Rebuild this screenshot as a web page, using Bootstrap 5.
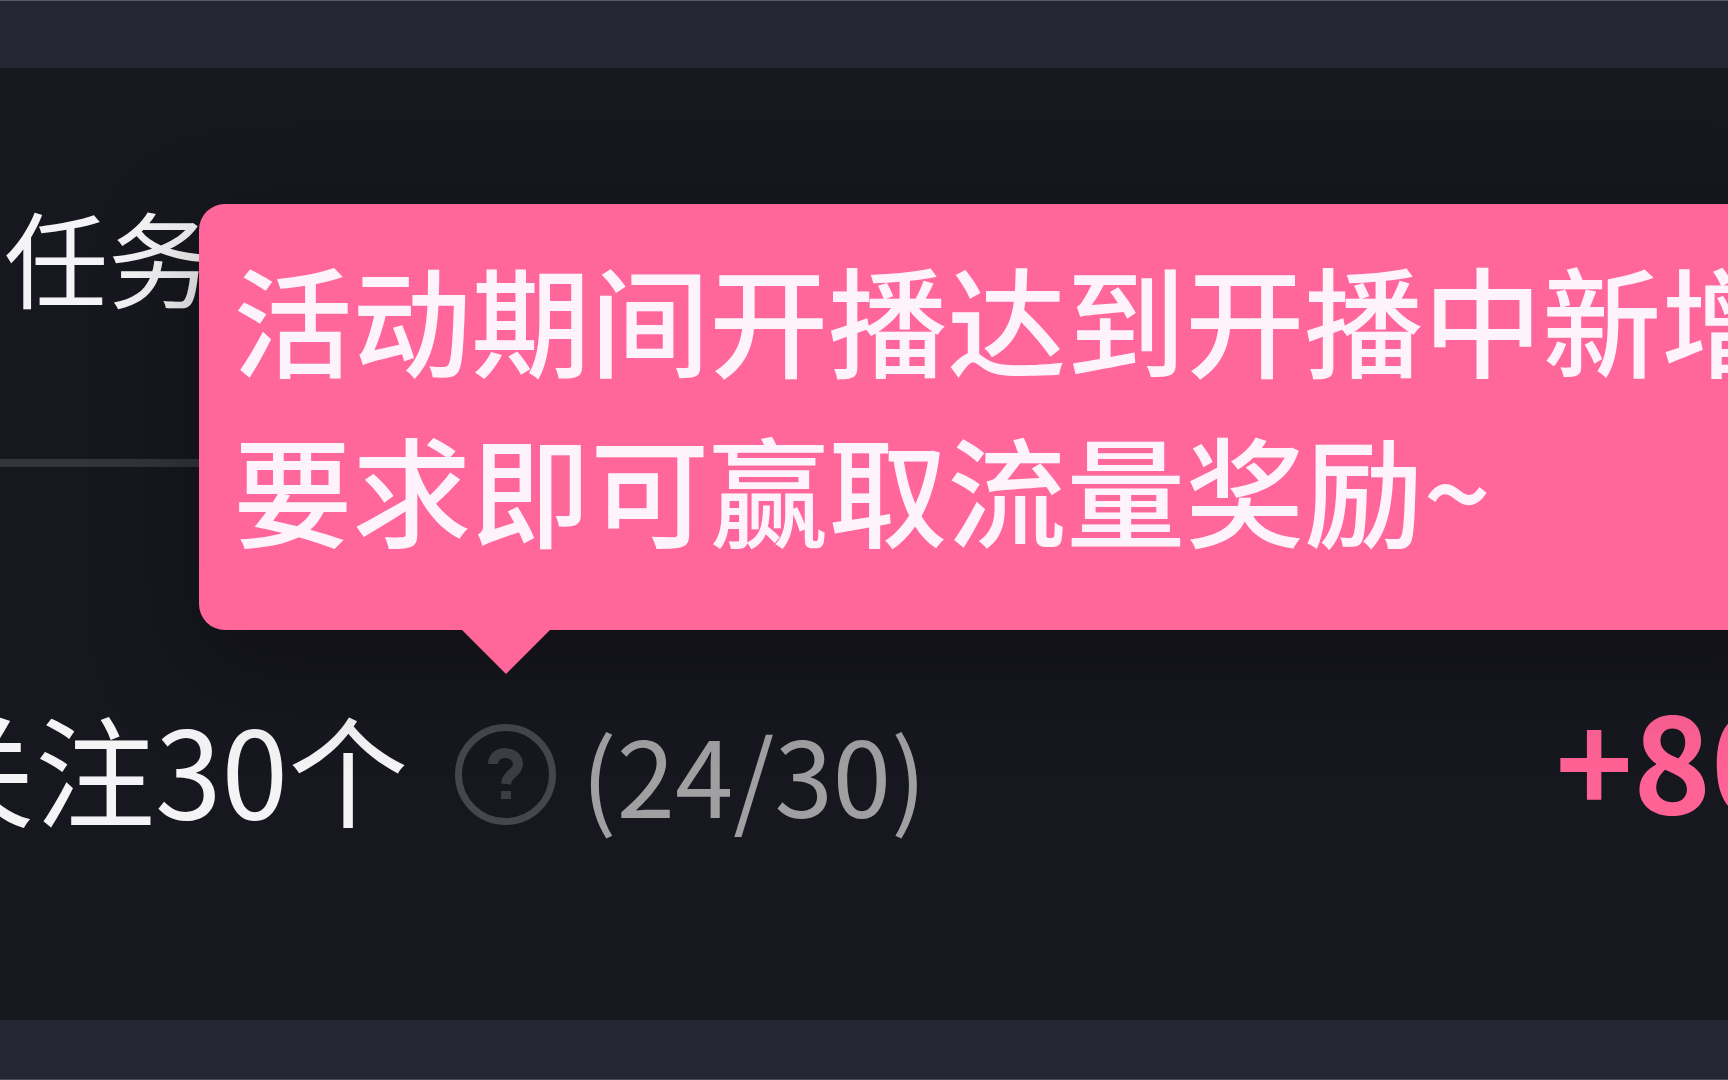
<!DOCTYPE html>
<html lang="zh-CN">
<head>
<meta charset="utf-8">
<meta name="viewport" content="width=device-width, initial-scale=1">
<title>任务</title>
<link href="https://cdn.jsdelivr.net/npm/bootstrap@5.3.0/dist/css/bootstrap.min.css" rel="stylesheet">
<style>
body { background: #242634; color: #f4f4f6; font-family: "Noto Sans CJK SC", sans-serif; }
.page { border-top: 1px solid #5a5c66; border-bottom: 1px solid #4a4c58; }
.panel { background: #17171f; margin: 67px -61px 0 -102px; }
.panel-title { font-size: 104px; line-height: 170px; padding: 103px 0 118px 2px; border-bottom: 8px solid #34353c; }
.task { font-size: 120px; line-height: 170px; padding: 215px 0 168px 17px; }
.help { width: 103px; height: 103px; margin: 14px 24px 0 46px; }
.help svg { width: 103px; height: 103px; }
.count { font-size: 105px; line-height: 150px; color: #a0a0a3; margin-top: 10px; }
.reward { font-size: 132px; line-height: 150px; color: #ff6295; margin-bottom: 20px; }
.tip { left: -255px; bottom: 196px; padding: 28px 34px 58px; border-radius: 26px; font-size: 119px; background: #ff6699; color: #fff3fb; box-shadow: 0 34px 102px rgba(0, 0, 0, .35); }
.tip::after { content: ""; position: absolute; top: 100%; left: 263px; border: 44px solid transparent; border-top-color: #ff6699; border-bottom: 0; }
</style>
</head>
<body>
<div class="page min-vh-100 overflow-hidden">
  <main class="panel">
    <h1 class="panel-title m-0 fw-normal text-nowrap">间任务</h1>
    <div class="task d-flex align-items-center text-nowrap">
      <span>关注30个</span>
      <div class="help position-relative flex-shrink-0">
        <button type="button" class="btn p-0 border-0 d-block" aria-label="任务说明" aria-describedby="tip">
          <svg class="d-block" viewBox="0 0 103 103" fill="none" stroke="#45474e" aria-hidden="true">
            <circle cx="51.5" cy="51.5" r="47" stroke-width="7"/>
            <path d="M39 41C39 26 64 27 64 41C64 50 53 50 52 61M52 68V76" stroke="#3b3e45" stroke-width="10"/>
          </svg>
        </button>
        <div class="tip position-absolute z-1 fw-medium" id="tip" role="tooltip">活动期间开播达到开播中新增<br>要求即可赢取流量奖励~</div>
      </div>
      <span class="count">(24/30)</span>
      <strong class="reward ms-auto">+80</strong>
    </div>
  </main>
</div>
<script src="https://cdn.jsdelivr.net/npm/bootstrap@5.3.0/dist/js/bootstrap.bundle.min.js"></script>
</body>
</html>
